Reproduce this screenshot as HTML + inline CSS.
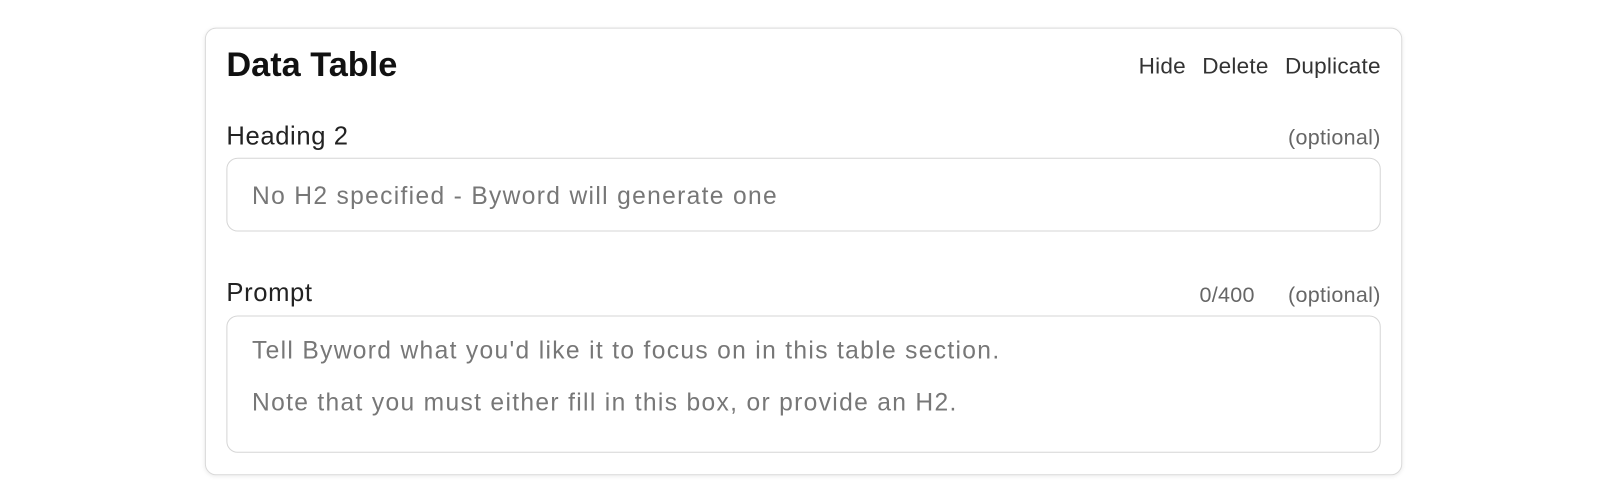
<!DOCTYPE html>
<html><head><style>
body{margin:0;width:1606px;height:504px;background:#fff;font-family:"Liberation Sans",sans-serif;position:relative;overflow:hidden}
.wrap{position:absolute;left:0;top:0;width:1568px;height:492px;transform:scale(1.0243);transform-origin:0 0}
.card{position:absolute;left:200px;top:27px;width:1167px;height:435px;border:1.5px solid #d9d9d9;border-radius:11px;box-shadow:0 1px 4px rgba(0,0,0,0.08)}
.t{position:absolute;white-space:nowrap}
.title{left:20px;top:17px;font-size:33.5px;font-weight:bold;color:#111}
.acts{position:absolute;right:20px;top:24px;font-size:22px;color:#333;letter-spacing:0.2px;display:flex;gap:16px}
.lbl{font-size:25px;color:#222;letter-spacing:0.6px}
.opt{font-size:21px;color:#666;letter-spacing:0.3px}
.box{position:absolute;left:20px;width:1125px;border:1.5px solid #d6d6d6;border-radius:11px}
.ph{font-size:24px;color:#777;letter-spacing:1.3px}
</style></head><body>
<div class="wrap">
<div class="card">
<div class="t title">Data Table</div>
<div class="acts"><span>Hide</span><span>Delete</span><span>Duplicate</span></div>
<div class="t lbl" style="left:20px;top:91px">Heading 2</div>
<div class="t opt" style="right:20px;top:95px">(optional)</div>
<div class="box" style="top:126px;height:70px"><div class="t ph" style="left:24px;top:23px">No H2 specified - Byword will generate one</div></div>
<div class="t lbl" style="left:20px;top:244px">Prompt</div>
<div class="t opt" style="left:970px;top:249px">0/400</div>
<div class="t opt" style="right:20px;top:249px">(optional)</div>
<div class="box" style="top:280px;height:132px">
<div class="t ph" style="left:24px;top:20px">Tell Byword what you'd like it to focus on in this table section.</div>
<div class="t ph" style="left:24px;top:71px">Note that you must either fill in this box, or provide an H2.</div>
</div>
</div>
</div>
</body></html>
